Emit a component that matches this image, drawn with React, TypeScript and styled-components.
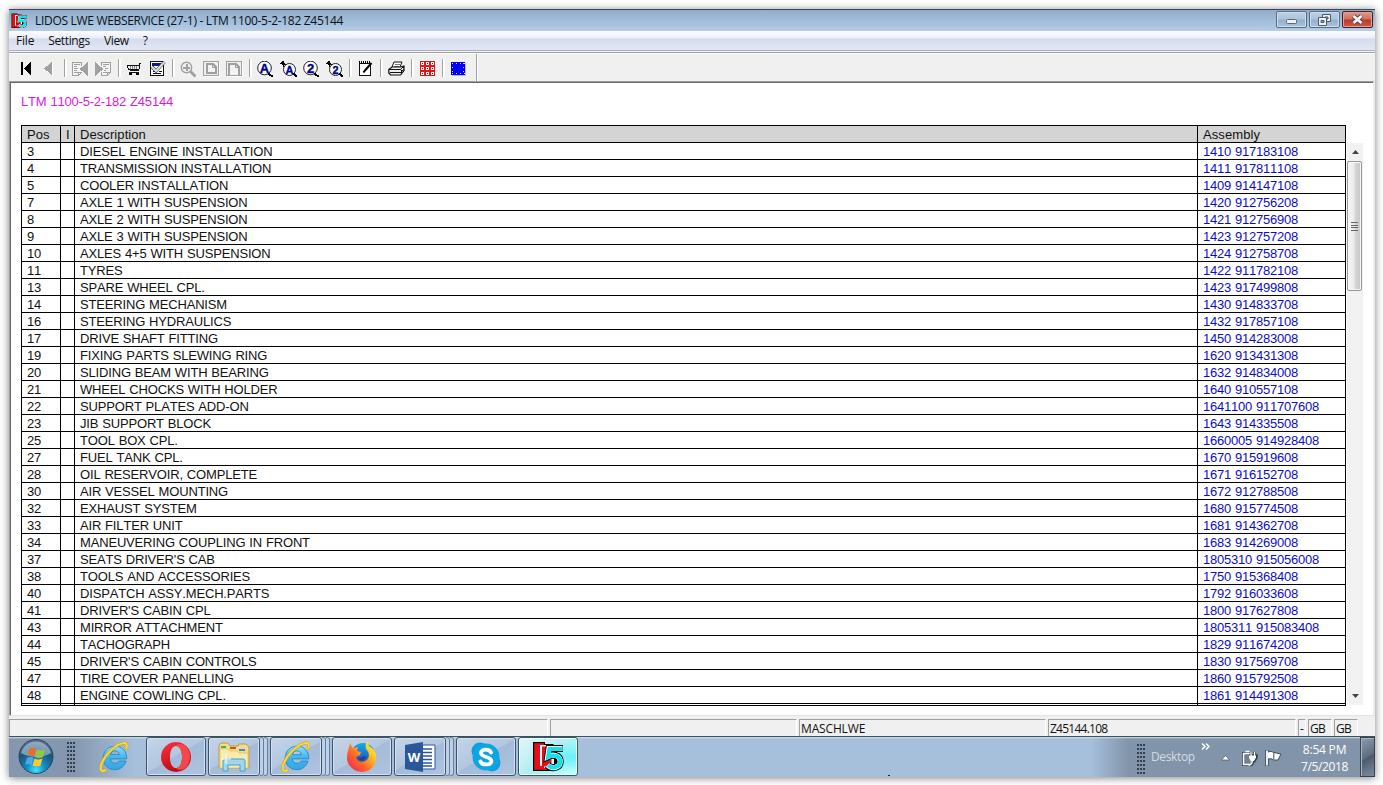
import React from "react";
import styled, { createGlobalStyle } from "styled-components";

const Global = createGlobalStyle`
  *{box-sizing:border-box}
  body{margin:0;background:#fff;overflow:hidden}
`;
const ui = `"Open Sans","Noto Sans",sans-serif`;

const Page = styled.div`
  width:1383px;height:785px;padding:9px 8px 8px 9px;background:#fff;overflow:hidden;
`;
const Window = styled.div`
  width:1366px;height:768px;display:flex;flex-direction:column;background:#f0f0f0;
  box-shadow:0 1px 8px rgba(0,0,0,.5);
`;
const Label = styled.span<{ $ls?: number }>`
  white-space:pre;letter-spacing:${p => p.$ls ?? 0}px;
`;
const TitleBar = styled.header`
  height:22px;flex:none;display:flex;align-items:center;gap:8px;padding:0 2px 0 2px;
  border-top:1px solid #3b4754;background:linear-gradient(#8fadca,#a1bcd9 50%,#b5cde7);
  font:12px/20px ${ui};color:#0c1116;
`;
const Caption = styled.div`flex:1;`;
const WinButtons = styled.div`display:flex;gap:2px;align-self:flex-start;padding-top:1px;`;
const WinButton = styled.div<{ $close?: boolean }>`
  width:31px;height:17px;border-radius:2px;display:flex;align-items:center;justify-content:center;
  border:1px solid ${p => (p.$close ? "#4a1c22" : "#566b84")};
  box-shadow:inset 0 0 0 1px ${p => (p.$close ? "#e3a294" : "#cfdeed")};
  background:${p => p.$close
    ? "linear-gradient(#dc9c8e,#cf6f5b 48%,#b8392a 52%,#c95c46)"
    : "linear-gradient(#bccfe3,#adc3db 48%,#94afcc 52%,#a9c2dc)"};
`;
const MenuBar = styled.nav`
  height:19px;flex:none;display:flex;padding-left:7px;gap:14px;font:12px/20px ${ui};color:#111;
  background:linear-gradient(#fdfdfe,#eceff8 36%,#d5dcee 42%,#dee3f3 75%,#e2e6f5);
`;
const Edge = styled.div`
  height:3px;flex:none;border-top:1px solid #aeb0bd;border-bottom:1px solid #a0a0a0;background:#f4f4f4;
`;
const ToolBar = styled.div`
  height:28px;flex:none;display:flex;align-items:center;padding-left:6px;border-top:1px solid #fff;background:#f0f0f0;
`;
const ToolButton = styled.div`
  width:23px;height:23px;display:flex;align-items:center;justify-content:center;margin-top:3px;
`;
const Separator = styled.i`
  width:8px;height:18px;flex:none;display:flex;margin-top:1px;
  &::before{content:"";width:2px;margin-left:3px;border-left:1px solid #a4a4a4;background:#fff}
`;
const ToolEnd = styled.i`width:2px;height:27px;margin-left:6px;border-left:1px solid #a0a0a0;background:#fff;`;
const Client = styled.main`
  height:635px;flex:none;display:flex;flex-direction:column;background:#fff;padding-left:10px;
  border-top:1px solid #a0a0a0;border-left:1px solid #a0a0a0;border-right:2px solid #ececec;border-bottom:1px solid #e3e3e3;
  box-shadow:inset 1px 1px 0 #696969;
`;
const Heading = styled.div`
  height:43px;padding-top:12px;margin-left:1px;font:13px/16px "Liberation Sans",sans-serif;
  font-kerning:none;word-spacing:.6px;color:#dc18dc;
`;
const TableArea = styled.div`display:flex;padding-left:1px;`;
const Table = styled.div`
  width:1325px;height:581px;overflow:hidden;border:1px solid #000;
  font:13px/17px "Liberation Sans",sans-serif;font-kerning:none;word-spacing:.5px;color:#111;
`;
const Row = styled.div<{ $head?: boolean; $stub?: boolean }>`
  display:grid;grid-template-columns:39px 14px 1123px 147px;height:${p => (p.$stub ? 1 : 17)}px;
  border-bottom:${p => (p.$stub ? 0 : 1)}px solid #000;background:${p => (p.$head ? "#d4d4d4" : "#fff")};
  letter-spacing:${p => (p.$head ? 0.08 : -0.17)}px;
`;
const Cell = styled.div<{ $blue?: boolean }>`
  padding-left:5px;white-space:pre;
  ${p => p.$blue && "color:#0c0cc8;letter-spacing:-.22px;"}
  &:not(:last-child){border-right:1px solid #000}
`;
const ScrollBar = styled.div`
  width:16px;height:562px;margin:18px 0 0 1px;background:#f2f2f2;display:flex;flex-direction:column;
`;
const ScrollEnd = styled.div`height:18px;display:flex;align-items:center;justify-content:center;`;
const ScrollTrack = styled.div`flex:1;`;
const Thumb = styled.div`
  height:130px;width:15px;border:1px solid #979797;border-radius:2px;display:flex;align-items:center;justify-content:center;
  background:linear-gradient(90deg,#f6f6f6,#ececec 45%,#d6d6d8 55%,#c6c6c9);box-shadow:inset 0 0 0 1px #f8f8f8;
`;
const StatusBar = styled.footer`
  height:20px;flex:none;display:flex;gap:2px;padding-top:3px;background:#f0f0f0;font:12px/17px ${ui};color:#111;
`;
const Panel = styled.div<{ $w: number }>`
  width:${p => p.$w}px;height:17px;padding-left:1px;overflow:hidden;
  border-left:1px solid #a0a0a0;border-top:1px solid #a0a0a0;border-right:1px solid #fff;
`;
const TaskBar = styled.div`
  height:41px;flex:none;display:flex;border-top:1px solid #3c5356;
  background:linear-gradient(#222,#222) 879px 38px/2px 1px no-repeat,
    linear-gradient(#cfdfed,rgba(255,255,255,0) 2px),
    linear-gradient(90deg,#8497ae 0,#8497ae 65px,#a6bfdb 125px,#a6bfdb 1082px,#8294aa 1120px);
`;
const StartArea = styled.div`width:58px;padding:1px 0 0 8px;`;
const Grip = styled.div`
  width:9px;height:31px;margin-top:5px;
  background:radial-gradient(circle at 1px 1px,#333f4d 0 .8px,transparent 1.1px) 0 0/3px 4px;
`;
const PinArea = styled.div`width:70px;display:flex;justify-content:center;align-items:center;padding-left:6px;`;
const Tasks = styled.div`display:flex;gap:2px;`;
const TaskStack = styled.div`width:60px;height:39px;display:flex;`;
const TaskButton = styled.div<{ $active?: boolean }>`
  flex:1;display:flex;align-items:center;justify-content:center;border:1px solid #3d5370;border-radius:3px;
  box-shadow:inset 0 0 0 1px ${p => (p.$active ? "#e6ffff" : "#d3e0ee")};
  background:${p => p.$active
    ? "radial-gradient(ellipse at 92% 52%,#6ceff5 0,rgba(120,245,250,.6) 30%,transparent 55%),linear-gradient(140deg,#e1f7f8,#b5eef2 45%,#9ff5f6 60%,#c5ffff)"
    : "linear-gradient(150deg,#c5d4e8,#b3c7e0 48%,#a4bbd9 50%,#aec4df)"};
`;
const StackEdge = styled.i`
  width:4px;border:1px solid #6680a1;border-left:0;border-radius:0 3px 3px 0;background:#bfd0e4;
`;
const Tray = styled.div`
  flex:1;display:flex;align-items:center;justify-content:flex-end;color:#fff;font:12px/17px ${ui};
`;
const Desk = styled.div`width:53px;padding:0 0 1px 5px;color:#d5dbe2;`;
const Chevron = styled.div`width:14px;align-self:flex-start;padding-left:2px;display:flex;margin-top:6px;`;
const TrayIcon = styled.div<{ $w: number }>`width:${p => p.$w}px;display:flex;justify-content:center;padding-top:2px;`;
const Clock = styled.div`width:71px;margin-left:3px;text-align:center;display:flex;flex-direction:column;padding-top:1px;`;
const ShowDesktop = styled.div`
  width:15px;height:40px;border:1px solid #36424f;box-shadow:inset 1px 1px 0 #a9b5c3;
  background:linear-gradient(150deg,#8d9caf,#5d6b7c 50%,#4b5a6b 52%,#7c8ca0);
`;

type K = { children: React.ReactNode };
const Ico = ({ children }: K) => (
  <svg width="17" height="17" viewBox="0 0 17 17" fill="none" shapeRendering="crispEdges">{children}</svg>
);
const G = "#a0a0a0";
const Doc = () => (
  <>
    <path d="M1.500 1.500h9v10l-3 3h-6z" stroke={G} fill="#f4f4f4" />
    <path d="M3 3.500h6M3 5.500h3M3 7.500h5M3 9.500h3M3 11.500h4M7.500 14v-3h3" stroke={G} />
  </>
);
const Lens = ({ small, ch }: { small?: boolean; ch: string }) =>
  small ? (
    <Ico>
      <path d="M0 2h1V1h1V0h2v2h1v1h1v3H5V4H4v2H3V4H2V3H0z" fill="#000" />
      <circle cx="9.500" cy="8.500" r="6" fill="#fff" stroke="#222" shapeRendering="auto" />
      <path d="M13 12h2v1h1v1h1v2h-2v-1h-1v-1h-1z" fill="#000" />
      <text x="9.500" y="12.500" fontSize="11" fontWeight="bold" fontFamily="Liberation Sans" textAnchor="middle" fill="#00008b" stroke="#00008b" strokeWidth=".3">{ch}</text>
    </Ico>
  ) : (
    <Ico>
      <circle cx="7.500" cy="7" r="6.800" fill="#fff" stroke="#222" shapeRendering="auto" />
      <path d="M11 12h2v1h1v1h2v2h-2v-1h-2v-1h-1z" fill="#000" />
      <text x="7.500" y="11.500" fontSize="13" fontWeight="bold" fontFamily="Liberation Sans" textAnchor="middle" fill="#00008b" stroke="#00008b" strokeWidth=".4">{ch}</text>
    </Ico>
  );

const icons: (React.ReactNode | "|")[] = [
  <Ico><path d="M3 1h2v13H3zM6 7.500L12.500 1v13z" fill="#000" /></Ico>,
  <Ico><path d="M4 8.500l8-6.500v13z" fill="#fff" /><path d="M3 7.500L11 1v13z" fill={G} /></Ico>,
  "|",
  <Ico><g transform="translate(-1)"><Doc /></g><path d="M5.500 8L17 0v16z" fill="#f4f4f4" /><path d="M7.500 8L16 1v14z" fill={G} /></Ico>,
  <Ico><g transform="translate(5)"><Doc /></g><path d="M11 8L0 0v16z" fill="#f4f4f4" /><path d="M8.500 8L0 1v14z" fill={G} /></Ico>,
  "|",
  <Ico>
    <path d="M15 2.500h-2v2H1.500v1l1 3H12M13 4v4l-1 1.500H4M3 11.500h10" stroke="#111" />
    <path d="M4.500 5v3M6.500 5v3M8.500 5v3M10.500 5v3" stroke="#888" />
    <path d="M3.500 12.500h2v1h-2zM10.500 12.500h2v1h-2z" stroke="#000" />
  </Ico>,
  <Ico>
    <path d="M1.500.500h13v14h-13z" fill="#fff" stroke="#111" /><path d="M3 2h9v3H3z" fill="#16168c" />
    <path d="M1 14h14M4 12.500h8M4 10.500h3M10 10.500h3" stroke="#111" />
    <path d="M3 6l4 4L15.500 1" stroke="#333" strokeWidth="3.200" shapeRendering="auto" /><path d="M3 6l4 4L15.500 1" stroke="#dcdcee" strokeWidth="2.200" shapeRendering="auto" />
  </Ico>,
  "|",
  <Ico>
    <circle cx="6.500" cy="6.500" r="5.200" stroke={G} strokeWidth="1.400" shapeRendering="auto" /><path d="M3 6.500h7M6.500 3v7" stroke={G} strokeWidth="2" />
    <path d="M10.500 10.500l5 5" stroke={G} strokeWidth="2.800" shapeRendering="auto" />
  </Ico>,
  <Ico><path d="M1 15.500h15.500V1" stroke="#fff" /><path d="M.500.500h15v14H.500z" stroke={G} /><path d="M4 3h6l3 3v6H4z" stroke={G} strokeWidth="2" fill="#f4f4f4" /><path d="M9 3h1v3h3v1H9z" fill={G} /></Ico>,
  <Ico><path d="M1 15.500h15.500V1" stroke="#fff" /><path d="M.500.500h15v14H.500z" stroke={G} /><path d="M3 14V3h7l3 3v8" stroke={G} strokeWidth="2" fill="#f4f4f4" /><path d="M9 3h1v3h3v1H9z" fill={G} /></Ico>,
  "|",
  <Lens ch="A" />, <Lens small ch="A" />, <Lens ch="2" />, <Lens small ch="2" />,
  "|",
  <Ico>
    <path d="M2.500 2.500h11v12h-11z" fill="#fff" stroke="#111" />
    <path d="M2 1.500h12" stroke="#000" strokeWidth="3" strokeDasharray="1 1" />
    <path d="M14.500 2L8 9.500l-1.500 2" stroke="#000" strokeWidth="2" shapeRendering="auto" />
  </Ico>,
  "|",
  <Ico>
    <path d="M4 6l2-5h8l-2 5" fill="#fff" stroke="#111" shapeRendering="auto" /><path d="M7 3.500h5M6 5h5" stroke="#555" strokeWidth=".8" />
    <path d="M.800 8.500L4 6h8.500l3.500-1v4.500L12.500 14H2.500L.800 12z" fill="#eee" stroke="#111" strokeWidth="1.200" shapeRendering="auto" />
    <path d="M1 8.500h11.500L16 5.500M1.500 11.500h11l3-3M13 9v4" stroke="#111" />
  </Ico>,
  "|",
  <Ico>
    <path d="M1 0h15v15H1z" fill="#e81414" />
    {[1, 6, 11].map(y => [2, 7, 12].map(x => (
      <React.Fragment key={`${x}-${y}`}><rect x={x} y={y} width="3" height="3" fill="#fff" /><rect x={x + 1} y={y + 1} width="1" height="1" fill="#b00000" /></React.Fragment>
    )))}
  </Ico>,
  "|",
  <Ico>
    <path d="M2 2h14v13H2z" fill="#b9b9d0" /><path d="M1 1h14v13H1z" fill="#0000f0" />
    <path d="M2 2.500h13M2 12.500h13" stroke="#dde" strokeDasharray="1 3" /><path d="M2.500 2v12M13.500 2v12" stroke="#dde" strokeDasharray="1 3" />
  </Ico>,
];

const L5 = ({ s }: { s: number }) => (
  <svg width={s} height={s} viewBox="0 0 32 32">
    <path d="M1 1h12v2h8l4 4v20l-4 3H1z" fill="#000" />
    <path d="M2.200 2.200h10V28.800h-10z" fill="#e80c14" />
    <path d="M8 4h12l2 2v22H12v-3H8z" fill="#fff" />
    <path d="M10 5.500h9.500v20H10z" fill="#e80c14" />
    <path d="M9.500 27h11v2h-11z" fill="#e80c14" />
    <path d="M31 7.500H17L15.800 15.500c5-2.500 12.400-1.500 12.400 5s-8.500 8-12.700 3.500" fill="none" stroke="#000" strokeWidth="7" />
    <path d="M30.500 7.500H17L15.800 15.500c5-2.500 12.400-1.500 12.400 5s-8.500 8-12.700 3.500" fill="none" stroke="#fff" strokeWidth="5.200" />
    <path d="M30.500 8H17.500L16.200 16c5-2.500 12-1.500 12 4.500s-8.200 7.500-12.200 3.500" fill="none" stroke="#14e3ee" strokeWidth="4.200" />
  </svg>
);
const IE = () => (
  <svg width="32" height="32" viewBox="0 0 34 34">
    <defs><linearGradient id="ie" x2="0" y2="1"><stop stopColor="#8fdcfa" /><stop offset=".5" stopColor="#3fb5ee" /><stop offset="1" stopColor="#35a6e5" /></linearGradient></defs>
    <path d="M30.500 19H13c.4 3 2.500 4.700 5.200 4.700 2 0 3.400-.9 4.300-2.400h7.300C28 27 23.600 30.500 18 30.500c-7.500 0-12.500-5.300-12.500-12.500S10.700 5.500 18 5.500 31 10.700 30.500 19zM13.200 14.500h9.500c-.4-2.500-2.200-4-4.700-4s-4.300 1.500-4.800 4z" fill="url(#ie)" stroke="#2384c2" strokeWidth=".9" />
    <path d="M8 31c-5 2.500-6.500-1-4-7.500C8 14 18 4.500 25.500 2.500 30.500 1 31.500 4 30 8" fill="none" stroke="#c99a14" strokeWidth="3" strokeLinecap="round" />
    <path d="M8 31c-5 2.500-6.500-1-4-7.500C8 14 18 4.500 25.500 2.500 30.500 1 31.500 4 30 8" fill="none" stroke="#fbd936" strokeWidth="2.100" strokeLinecap="round" />
  </svg>
);
const Opera = () => (
  <svg width="32" height="32" viewBox="0 0 32 32">
    <defs><linearGradient id="op" x2=".4" y2="1"><stop stopColor="#f8343c" /><stop offset="1" stopColor="#c00a1c" /></linearGradient></defs>
    <path fillRule="evenodd" d="M16 1a15 15 0 100 30 15 15 0 000-30zm0 4c4 0 6 5 6 11s-2 11-6 11-6-5-6-11 2-11 6-11z" fill="url(#op)" />
    <path d="M16 5c2-2.500 5-2.500 8-1a15 15 0 010 24c-3 1.500-6 1-8-1 4 0 6-5 6-11S20 5 16 5z" fill="#f5464b" />
  </svg>
);
const Folder = () => (
  <svg width="34" height="32" viewBox="0 0 34 32">
    <path d="M2 4l2-2h7l2 3h8l1-2h7l3 3v21H2z" fill="#f2dc8c" stroke="#b99b46" />
    <path d="M4 5h5v2H4z" fill="#4fae45" /><path d="M13 6h6v2h-6z" fill="#c5542f" /><path d="M22 8h6v2h-6z" fill="#3c8fce" />
    <path d="M3 8h8l2 2h7l2 2h9v15H3z" fill="#f9ebac" stroke="#d5bd69" strokeWidth=".7" />
    <path d="M6 30V20q0-2 2-2h18q2 0 2 2v10h-5v-6H11v6z" fill="#9fd7f0" stroke="#4b9dc4" />
    <path d="M9 13v10M4 18h10" stroke="#fff" />
  </svg>
);
const Firefox = () => (
  <svg width="32" height="32" viewBox="0 0 32 32">
    <defs>
      <linearGradient id="ff" x1="1" y1="0" x2="0" y2="1"><stop stopColor="#fff04a" /><stop offset=".3" stopColor="#ffc72c" /><stop offset=".6" stopColor="#ff6a22" /><stop offset="1" stopColor="#f0156a" /></linearGradient>
      <linearGradient id="fb" x2="0" y2="1"><stop stopColor="#13a9ee" /><stop offset="1" stopColor="#263d9e" /></linearGradient>
    </defs>
    <circle cx="17" cy="14" r="12" fill="url(#fb)" />
    <path d="M4 2l3 5 5-1-1 4 4 1-1 3-4 2c1 4 5 6 9 4 5-2 5-8 1-12-1-4 0-6 2-8l1 5c6 3 8 8 7 13-1 8-7 13-14 13S1 25 1 17C1 11 3 8 4 2z" fill="url(#ff)" />
    <path d="M11 16c2 1 5 1 6-1l3 1c-1 4-6 5-9 0z" fill="#263d9e" />
  </svg>
);
const Word = () => (
  <svg width="32" height="32" viewBox="0 0 32 32">
    <path d="M17 4h14v24H17z" fill="#fff" stroke="#2b579a" />
    <path d="M19 8h9M19 11.500h9M19 15h9M19 18.500h9M19 22h9M19 25h9" stroke="#2b579a" strokeWidth="1.500" />
    <path d="M1 4l18-3v30L1 28z" fill="#2b579a" />
    <text x="10" y="20.500" fontFamily="Open Sans" fontWeight="bold" fontSize="13" textAnchor="middle" fill="#fff">W</text>
  </svg>
);
const Skype = () => (
  <svg width="32" height="32" viewBox="0 0 32 32">
    <circle cx="10" cy="10" r="8.500" fill="#0a9fe0" /><circle cx="22" cy="22" r="8.500" fill="#0a9fe0" /><circle cx="16" cy="16" r="13.500" fill="#0ea5e5" />
    <path d="M21 11.500C19.500 7.500 10.800 7.800 11 12c.2 4.500 10.600 3.500 10.400 8-.2 4.500-9.500 4.500-11 .5" fill="none" stroke="#fff" strokeWidth="3.800" strokeLinecap="round" />
  </svg>
);
const Start = () => (
  <svg width="38" height="38" viewBox="0 0 38 38">
    <defs>
      <radialGradient id="orb" cx=".5" cy=".9" r=".85"><stop stopColor="#3be5fb" /><stop offset=".35" stopColor="#0f87bf" /><stop offset=".7" stopColor="#1d5379" /><stop offset="1" stopColor="#536f88" /></radialGradient>
    </defs>
    <circle cx="19" cy="18.500" r="17" fill="url(#orb)" stroke="#254a69" />
    <path d="M4 15A15.500 15.500 0 0134 15c-8 5-21 5-30 0z" fill="#d4e4ef" opacity=".5" />
    <path d="M12.500 11q3-2 6.500 0l-2 7.500q-3.500-2-6.500 0z" fill="#ee6a28" /><path d="M20 11.500q3.500 2 8 0l-2 7.500q-4 2-8 0z" fill="#96c83c" />
    <path d="M10 20q3-2 6.500 0l-2 7q-3-2-6.500 0z" fill="#4ba9e6" /><path d="M17.500 20.500q3.500 2 8 0l-2 7q-4 2-8 0z" fill="#fdc936" />
  </svg>
);

const rows: [string, string, string][] = `3|DIESEL ENGINE INSTALLATION|1410 917183108
4|TRANSMISSION INSTALLATION|1411 917811108
5|COOLER INSTALLATION|1409 914147108
7|AXLE 1 WITH SUSPENSION|1420 912756208
8|AXLE 2 WITH SUSPENSION|1421 912756908
9|AXLE 3 WITH SUSPENSION|1423 912757208
10|AXLES 4+5 WITH SUSPENSION|1424 912758708
11|TYRES|1422 911782108
13|SPARE WHEEL CPL.|1423 917499808
14|STEERING MECHANISM|1430 914833708
16|STEERING HYDRAULICS|1432 917857108
17|DRIVE SHAFT FITTING|1450 914283008
19|FIXING PARTS SLEWING RING|1620 913431308
20|SLIDING BEAM WITH BEARING|1632 914834008
21|WHEEL CHOCKS WITH HOLDER|1640 910557108
22|SUPPORT PLATES ADD-ON|1641100 911707608
23|JIB SUPPORT BLOCK|1643 914335508
25|TOOL BOX CPL.|1660005 914928408
27|FUEL TANK CPL.|1670 915919608
28|OIL RESERVOIR, COMPLETE|1671 916152708
30|AIR VESSEL MOUNTING|1672 912788508
32|EXHAUST SYSTEM|1680 915774508
33|AIR FILTER UNIT|1681 914362708
34|MANEUVERING COUPLING IN FRONT|1683 914269008
37|SEATS DRIVER'S CAB|1805310 915056008
38|TOOLS AND ACCESSORIES|1750 915368408
40|DISPATCH ASSY.MECH.PARTS|1792 916033608
41|DRIVER'S CABIN CPL|1800 917627808
43|MIRROR ATTACHMENT|1805311 915083408
44|TACHOGRAPH|1829 911674208
45|DRIVER'S CABIN CONTROLS|1830 917569708
47|TIRE COVER PANELLING|1860 915792508
48|ENGINE COWLING CPL.|1861 914491308`.split("\n").map(l => l.split("|") as [string, string, string]);

const tasks: { icon: React.ReactNode; stack?: number; active?: boolean }[] = [
  { icon: <Opera /> }, { icon: <Folder />, stack: 2 }, { icon: <IE />, stack: 2 }, { icon: <Firefox /> },
  { icon: <Word />, stack: 2 }, { icon: <Skype /> }, { icon: <L5 s={32} />, active: true },
];

export default function App() {
  return (
    <Page>
      <Global />
      <Window>
        <TitleBar>
          <L5 s={16} />
          <Caption><Label $ls={-0.31}>LIDOS LWE WEBSERVICE (27-1) - LTM 1100-5-2-182 Z45144</Label></Caption>
          <WinButtons>
            <WinButton><svg width="11" height="9"><rect x=".5" y="4.500" width="10" height="4" rx="1" fill="#f0f0f0" stroke="#59677a" /></svg></WinButton>
            <WinButton><svg width="13" height="12"><path d="M4.500.500h8v7h-8z" fill="#eef1f4" stroke="#4b5a6c" /><path d="M7 3h3v2H7z" fill="#8ba6c4" stroke="#4b5a6c" /><path d="M.500 3.500h8v8h-8z" fill="#eef1f4" stroke="#4b5a6c" /><path d="M3 6.500h3v2H3z" fill="#8ba6c4" stroke="#4b5a6c" /></svg></WinButton>
            <WinButton $close><svg width="13" height="11"><path d="M2.500 2l8 7M10.500 2l-8 7" stroke="#54414a" strokeWidth="4.600" /><path d="M2.500 2l8 7M10.500 2l-8 7" stroke="#f4f4f4" strokeWidth="2.800" /></svg></WinButton>
          </WinButtons>
        </TitleBar>
        <MenuBar>
          <Label $ls={-0.2}>File</Label><Label $ls={-0.35}>Settings</Label><Label $ls={-0.35}>View</Label><Label>?</Label>
        </MenuBar>
        <Edge />
        <ToolBar>
          {icons.map((n, i) => (n === "|" ? <Separator key={i} /> : <ToolButton key={i}>{n}</ToolButton>))}
          <ToolEnd />
        </ToolBar>
        <Client>
          <Heading><Label $ls={-0.2}>LTM 1100-5-2-182 Z45144</Label></Heading>
          <TableArea>
            <Table>
              <Row $head><Cell>Pos</Cell><Cell>I</Cell><Cell>Description</Cell><Cell>Assembly</Cell></Row>
              {rows.map(r => (
                <Row key={r[0]}><Cell>{r[0]}</Cell><Cell /><Cell>{r[1]}</Cell><Cell $blue>{r[2]}</Cell></Row>
              ))}
              <Row $stub><Cell /><Cell /><Cell /><Cell /></Row>
            </Table>
            <ScrollBar>
              <ScrollEnd><svg width="7" height="4"><path d="M0 4l3.500-4L7 4z" fill="#444" /></svg></ScrollEnd>
              <ScrollTrack>
                <Thumb><svg width="7" height="9"><path d="M0 .500h7M0 3.500h7M0 5.500h7M0 8.500h7" stroke="#666" /></svg></Thumb>
              </ScrollTrack>
              <ScrollEnd><svg width="7" height="4"><path d="M0 0l3.500 4L7 0z" fill="#444" /></svg></ScrollEnd>
            </ScrollBar>
          </TableArea>
        </Client>
        <StatusBar>
          <Panel $w={539} /><Panel $w={247} />
          <Panel $w={247}><Label $ls={-0.15}>MASCHLWE</Label></Panel>
          <Panel $w={248}><Label $ls={-0.75}>Z45144.108</Label></Panel>
          <Panel $w={8}>-</Panel><Panel $w={24}><Label $ls={-0.6}>GB</Label></Panel><Panel $w={24}><Label $ls={-0.6}>GB</Label></Panel>
        </StatusBar>
        <TaskBar>
          <StartArea><Start /></StartArea>
          <Grip />
          <PinArea><IE /></PinArea>
          <Tasks>
            {tasks.map((t, i) => (
              <TaskStack key={i}>
                <TaskButton $active={t.active}>{t.icon}</TaskButton>
                {Array.from({ length: t.stack ?? 0 }, (_, k) => <StackEdge key={k} />)}
              </TaskStack>
            ))}
          </Tasks>
          <Tray>
            <Grip />
            <Desk><Label $ls={-0.35}>Desktop</Label></Desk>
            <Chevron><svg width="9" height="7"><path d="M1 .500l3 3-3 3M5 .500l3 3-3 3" fill="none" stroke="#fff" strokeWidth="1.500" /></svg></Chevron>
            <TrayIcon $w={24}><svg width="9" height="6"><path d="M.500 5L4.500.500 8.500 5z" fill="#fff" stroke="#44505e" strokeWidth=".7" /></svg></TrayIcon>
            <TrayIcon $w={24}><svg width="17" height="17"><path d="M2.500 3.500h7v11h-7z" fill="#6f8093" stroke="#303b48" strokeWidth="3" /><path d="M2.500 3.500h8v11h-8zM4.500 1.500h4" fill="#6f8093" stroke="#fff" strokeWidth="1.500" /><path d="M8 5.500h7.500v2l-2 3.500h-1.500q0 4-3 4M10 5.500V2M13.500 5.500V2" fill="none" stroke="#303b48" strokeWidth="2.500" /><path d="M8 5.500h7v2L13 11h-3L8 8z" fill="#fff" /><path d="M10 6V2M13.500 6V2M11.500 10q0 5-4 5" stroke="#fff" strokeWidth="1.300" fill="none" /></svg></TrayIcon>
            <TrayIcon $w={25}><svg width="17" height="16"><path d="M2 0v16" stroke="#3d4a59" strokeWidth="3.500" /><path d="M2.500 2q4-1.500 6.500.500l7 1.500-3 6H9Q6 8 2.500 9z" fill="#fff" stroke="#3d4a59" /><path d="M8.800 3v6" stroke="#3d4a59" /><path d="M2 .500v15" stroke="#fff" strokeWidth="1.800" /></svg></TrayIcon>
            <Clock><Label $ls={-0.2}>8:54 PM</Label><Label $ls={-0.35}>7/5/2018</Label></Clock>
            <ShowDesktop />
          </Tray>
        </TaskBar>
      </Window>
    </Page>
  );
}
